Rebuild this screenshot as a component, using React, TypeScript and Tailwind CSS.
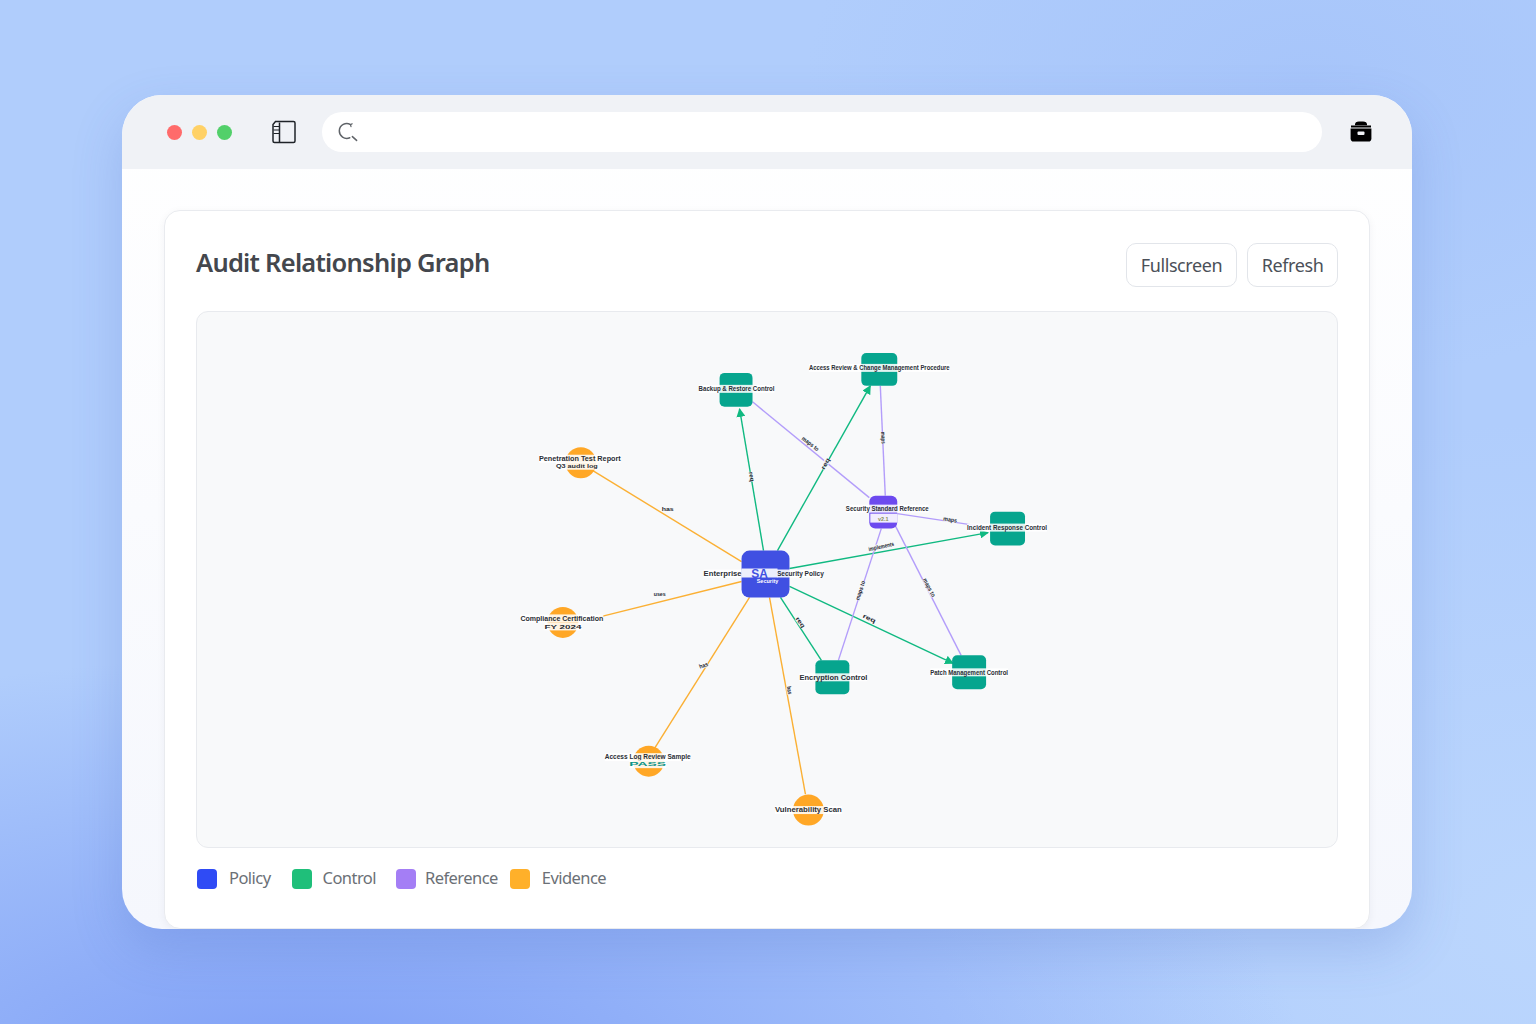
const ORIGIN = { x: 196, y: 311 };

const EDGES = [
  { d: "M763 550L739 408", c: "#10b981", arrow: true },
  { d: "M777 550L870 385", c: "#10b981", arrow: true },
  { d: "M789 568L988 532", c: "#10b981", arrow: true },
  { d: "M780 597L821 660", c: "#10b981" },
  { d: "M789 586L953 663", c: "#10b981", arrow: true },
  { d: "M869 497L752 401", c: "#b39dfa" },
  { d: "M885 495L880 385", c: "#b39dfa" },
  { d: "M897 513L990 527", c: "#b39dfa" },
  { d: "M881 528L838 660", c: "#b39dfa" },
  { d: "M895 525L961 655", c: "#b39dfa" },
  { d: "M592 470L741 561", c: "#fbb034" },
  { d: "M597 617L741 581", c: "#fbb034" },
  { d: "M654 748L749 597", c: "#fbb034" },
  { d: "M805 794L769 597", c: "#fbb034" },
];

const EDGE_LABELS = [
  { x: 667, y: 508, a: 0, t: "has", w: 12 },
  { x: 659, y: 594, a: 0, t: "uses", w: 12 },
  { x: 703, y: 665, a: -20, t: "has", w: 9 },
  { x: 789, y: 690, a: 80, t: "has", w: 8 },
  { x: 751, y: 476, a: 80, t: "req", w: 10 },
  { x: 825, y: 463, a: -60, t: "req", w: 12 },
  { x: 810, y: 443, a: 38, t: "maps to", w: 20 },
  { x: 883, y: 437, a: 88, t: "maps", w: 12 },
  { x: 950, y: 519, a: 8, t: "maps", w: 14 },
  { x: 881, y: 546, a: -12, t: "implements", w: 26 },
  { x: 860, y: 590, a: -72, t: "maps to", w: 20 },
  { x: 929, y: 587, a: 62, t: "maps to", w: 20 },
  { x: 800, y: 622, a: 55, t: "req", w: 12 },
  { x: 869, y: 618, a: 25, t: "req", w: 14 },
];

const CONTROLS = [
  { x: 719, y: 372, w: 33, h: 34 },
  { x: 861, y: 352, w: 36, h: 33 },
  { x: 990, y: 511, w: 35, h: 34 },
  { x: 815, y: 660, w: 34, h: 34 },
  { x: 952, y: 655, w: 34, h: 34 },
];

const EVIDENCE = [
  { x: 580, y: 462 },
  { x: 562, y: 622 },
  { x: 648, y: 761 },
  { x: 808, y: 810 },
];

const LABELS = [
  { x: 736, y: 388, w: 76, t: "Backup & Restore Control" },
  { x: 879, y: 367, w: 141, t: "Access Review & Change Management Procedure" },
  { x: 887, y: 508, w: 83, t: "Security Standard Reference" },
  { x: 1007, y: 527, w: 80, t: "Incident Response Control" },
  { x: 833, y: 677, w: 68, t: "Encryption Control" },
  { x: 969, y: 672, w: 78, t: "Patch Management Control" },
  { x: 722, y: 573, w: 38, t: "Enterprise" },
  { x: 800, y: 573, w: 47, t: "Security Policy" },
  { x: 579, y: 458, w: 82, t: "Penetration Test Report" },
  { x: 576, y: 465, w: 42, t: "Q3 audit log", small: true },
  { x: 561, y: 618, w: 83, t: "Compliance Certification" },
  { x: 562, y: 626, w: 37, t: "FY 2024", small: true },
  { x: 647, y: 757, w: 86, t: "Access Log Review Sample" },
  { x: 647, y: 764, w: 37, t: "PASS", small: true, c: "#0d9488" },
  { x: 808, y: 810, w: 67, t: "Vulnerability Scan" },
];

function SidebarIcon() {
  return (
    <svg width="24" height="24" viewBox="0 0 24 24" fill="none" stroke="#1f2328" strokeWidth="1.5">
      <path d="M3.5 1.5H21.5Q23 1.5 23 3V21Q23 22.5 21.5 22.5H2.5Q1 22.5 1 21V4.5Z" />
      <path d="M7.5 2.5V22.5" />
      <path d="M1.5 6.5H7.5M1.5 10H7.5M1.5 13.5H7.5" strokeWidth="1" />
    </svg>
  );
}

function SearchIcon() {
  return (
    <svg width="20" height="20" viewBox="0 0 20 20" fill="none" stroke="#5f6368" strokeWidth="1.5" strokeLinecap="round">
      <path d="M12.5 2.6A7.4 7.4 0 1 0 11.8 15.7" />
      <path d="M12.5 2.6L14.2 1.8M12.5 2.6L13 4.6" strokeWidth="1.2" />
      <path d="M14.4 14.6L18.6 18.4" />
    </svg>
  );
}

function BriefcaseIcon() {
  return (
    <svg width="22" height="21" viewBox="0 0 22 21">
      <path d="M5 3.4Q5 .4 9 .4H13Q17 .4 17 3.4V4.2H5Z" fill="#000" />
      <path d="M1 4.6H21V6.4H1Z" fill="#000" />
      <path d="M.6 7.6H21.4V17.5Q21.4 20.6 18.4 20.6H3.6Q.6 20.6 .6 17.5Z" fill="#000" />
      <rect x="7.5" y="10.6" width="7" height="3.4" rx="1" fill="#f0f2f6" />
    </svg>
  );
}

function Graph() {
  return (
    <svg
      className="block h-full w-full"
      viewBox={`${ORIGIN.x} ${ORIGIN.y} 1141 536`}
      fontFamily='"Liberation Sans", Arial, sans-serif'
    >
      <defs>
        <marker id="arrow-green" viewBox="0 0 10 10" refX="9" refY="5" markerWidth="9" markerHeight="9" markerUnits="userSpaceOnUse" orient="auto">
          <path d="M0 0L10 5L0 10Z" fill="#10b981" />
        </marker>
      </defs>

      {EDGES.map((e) => (
        <path
          key={e.d}
          d={e.d}
          stroke={e.c}
          strokeWidth="1.4"
          fill="none"
          markerEnd={e.arrow ? "url(#arrow-green)" : undefined}
        />
      ))}

      {EDGE_LABELS.map((l) => (
        <g key={`${l.x}-${l.y}`} transform={`translate(${l.x} ${l.y}) rotate(${l.a})`}>
          <rect x={-l.w / 2} y="-3" width={l.w} height="6" fill="#f8f9fa" opacity="0.8" />
          <text y="2" textAnchor="middle" fontSize="6" fontWeight="700" fill="#1f2933" textLength={l.w} lengthAdjust="spacingAndGlyphs">
            {l.t}
          </text>
        </g>
      ))}

      <rect x="741" y="550" width="48" height="47" rx="8" fill="#4050e2" />
      <rect x="869" y="495" width="28" height="33" rx="6" fill="#6d4aef" />
      {CONTROLS.map((n) => (
        <rect key={n.x} x={n.x} y={n.y} width={n.w} height={n.h} rx="5" fill="#06a58e" />
      ))}
      {EVIDENCE.map((n) => (
        <circle key={n.x} cx={n.x} cy={n.y} r="15.5" fill="#ffa726" />
      ))}

      {LABELS.map((l) => (
        <g key={l.t}>
          <rect x={l.x - l.w / 2} y={l.y - 4} width={l.w} height="8" fill="#fff" opacity="0.88" />
          <text
            x={l.x}
            y={l.y + 2.3}
            textAnchor="middle"
            fontSize={l.small ? 5.5 : 6.5}
            fontWeight="700"
            fill={l.c ?? "#2a2e35"}
            textLength={l.w}
            lengthAdjust="spacingAndGlyphs"
          >
            {l.t}
          </text>
        </g>
      ))}

      <rect x="741" y="568" width="36" height="9" fill="#fff" opacity="0.9" />
      <text x="759" y="577" textAnchor="middle" fontSize="12" fontWeight="700" fill="#4050e2">
        SA
      </text>
      <text x="767" y="583" textAnchor="middle" fontSize="5.5" fontWeight="700" fill="#ffffff">
        Security
      </text>
      <rect x="870" y="513" width="27" height="9" fill="#fff" opacity="0.9" />
      <text x="883" y="520" textAnchor="middle" fontSize="5.5" fontWeight="700" fill="#8a8f5a">
        v2.1
      </text>
    </svg>
  );
}

const LEGEND = [
  { name: "Policy", swatch: "bg-[#2f4bf5]", text: "ml-[12px]", gap: "mr-[21px]" },
  { name: "Control", swatch: "bg-[#1fbf7a]", text: "ml-[11px]", gap: "mr-[20px]" },
  { name: "Reference", swatch: "bg-[#a47ef5]", text: "ml-[9px]", gap: "mr-[12px]" },
  { name: "Evidence", swatch: "bg-[#ffb02a]", text: "ml-[12px]", gap: "" },
];

export default function App() {
  return (
    <div
      className="h-[1024px] w-[1536px] overflow-hidden bg-[#b0cdfc] bg-[radial-gradient(ellipse_500px_300px_at_85%_8%,#a7c5fa_0%,transparent_100%),radial-gradient(ellipse_1000px_420px_at_20%_105%,#7f9ff6_0%,transparent_100%),radial-gradient(ellipse_600px_500px_at_100%_90%,#bbd6fd_0%,transparent_100%)] pl-[122px] pt-[95px] font-['Noto_Sans','Open_Sans',sans-serif]"
    >
      <div className="flex h-[834px] w-[1290px] flex-col overflow-hidden rounded-[40px] bg-gradient-to-b from-white to-[#f5f7fd] shadow-[0_20px_50px_rgba(70,100,190,0.22)]">
        <header className="flex h-[74px] shrink-0 items-center bg-[#f0f2f6] pl-[45px] pr-[40px]">
          <div className="flex gap-[10px]">
            <span className="h-[15px] w-[15px] rounded-full bg-[#ff6b6b]" />
            <span className="h-[15px] w-[15px] rounded-full bg-[#ffd166]" />
            <span className="h-[15px] w-[15px] rounded-full bg-[#52d06a]" />
          </div>
          <div className="ml-[40px]">
            <SidebarIcon />
          </div>
          <div className="ml-[26px] flex h-10 w-[1001px] items-center rounded-full bg-white pl-4">
            <SearchIcon />
          </div>
          <div className="ml-[28px] -translate-y-px">
            <BriefcaseIcon />
          </div>
        </header>

        <main className="ml-[42px] mt-[41px] h-[722px] w-[1206px] rounded-2xl border border-[#e9ebef] bg-white px-[31px] pt-[32px] shadow-[0_2px_8px_rgba(30,41,59,0.05)]">
          <div className="flex h-11 items-center justify-between">
            <h1 className="-translate-y-[2px] text-[25.5px] font-semibold leading-none tracking-[-0.75px] text-[#44474d]">
              Audit Relationship Graph
            </h1>
            <div className="flex gap-[10px]">
              <button className="h-11 w-[111px] rounded-[10px] border border-[#e2e5ea] text-[18px] tracking-[-0.4px] text-[#4b5058]">
                Fullscreen
              </button>
              <button className="h-11 w-[91px] rounded-[10px] border border-[#e2e5ea] text-[18px] tracking-[-0.4px] text-[#4b5058]">
                Refresh
              </button>
            </div>
          </div>

          <div className="mt-6 h-[537px] w-[1142px] overflow-hidden rounded-xl border border-[#e8eaee] bg-[#f8f9fa]">
            <Graph />
          </div>

          <ul className="mt-[21px] flex h-5 items-center pl-px">
            {LEGEND.map((item) => (
              <li key={item.name} className={`flex items-center ${item.gap}`}>
                <span className={`h-5 w-5 rounded-[4px] ${item.swatch}`} />
                <span className={`${item.text} -translate-y-px text-[16.5px] tracking-[-0.55px] text-[#6b7076]`}>{item.name}</span>
              </li>
            ))}
          </ul>
        </main>
      </div>
    </div>
  );
}
